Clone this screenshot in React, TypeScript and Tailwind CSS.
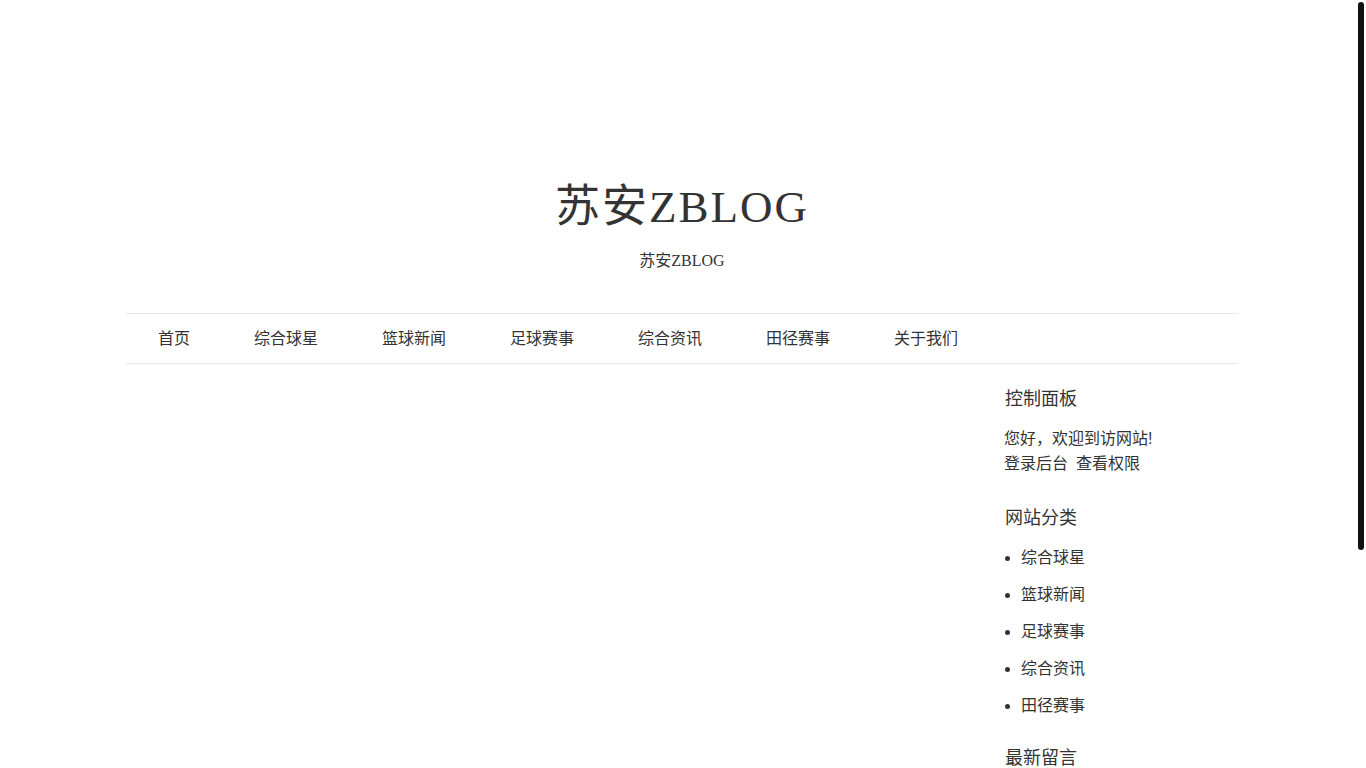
const navItems = ['首页', '综合球星', '篮球新闻', '足球赛事', '综合资讯', '田径赛事', '关于我们'];

const categories = ['综合球星', '篮球新闻', '足球赛事', '综合资讯', '田径赛事'];

const sans = "font-['Liberation_Sans','Noto_Sans_CJK_SC',sans-serif]";

export default function App() {
  return (
    <div className="relative h-screen overflow-hidden bg-white text-[#333]">
      <header className="pt-[177px] pr-[2px] text-center font-['Liberation_Serif','Noto_Sans_CJK_SC',serif]">
        <h1 className="text-[45px] leading-[60px] tracking-[2px] text-[#333]">苏安ZBLOG</h1>
        <p className="mt-[12px] text-[16px] leading-6 text-[#333]">苏安ZBLOG</p>
      </header>

      <div className="ml-[126px] mt-[40px] w-[1112px]">
        <nav className={`flex h-[51px] items-center border-y border-[#e8e8e8] ${sans}`}>
          {navItems.map((item) => (
            <a key={item} href="#" className="px-8 text-[16px] leading-[49px] text-[#333]">
              {item}
            </a>
          ))}
        </nav>

        <div className={`flex ${sans}`}>
          <main className="flex-1" />
          <aside className="w-[234px] pt-[22px]">
            <section>
              <h3 className="pl-px text-[18px] leading-[27px]">控制面板</h3>
              <div className="mt-[13px] text-[16px] leading-[25px]">
                <p>您好，欢迎到访网站!</p>
                <p>
                  <a href="#">登录后台</a>
                  <a href="#" className="ml-2">查看权限</a>
                </p>
              </div>
            </section>

            <section className="mt-[29px]">
              <h3 className="pl-px text-[18px] leading-[27px]">网站分类</h3>
              <ul className="mt-[7px] list-disc pl-[17px] text-[16px] leading-[37px]">
                {categories.map((c) => (
                  <li key={c}>
                    <a href="#">{c}</a>
                  </li>
                ))}
              </ul>
            </section>

            <section className="mt-[21px]">
              <h3 className="pl-px text-[18px] leading-[27px]">最新留言</h3>
            </section>
          </aside>
        </div>
      </div>

      {/* scrollbar thumb */}
      <div className="absolute right-[2px] top-[2px] h-[548px] w-[6px] rounded-full bg-[#111]" />
    </div>
  );
}
